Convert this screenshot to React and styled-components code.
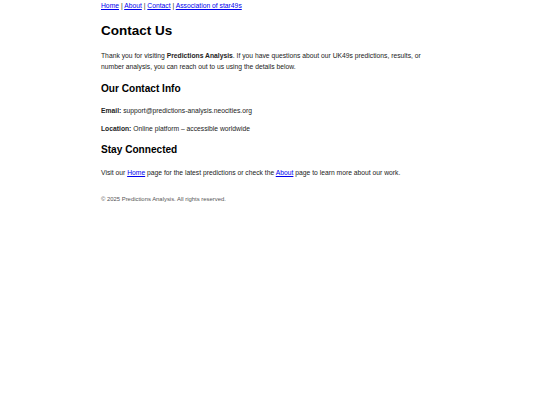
import styled, { createGlobalStyle } from 'styled-components'

const Global = createGlobalStyle`
body{
  margin:0;
  background:#fff;
  font-family:"Liberation Sans", Arial, sans-serif;
  font-size:6.75px;
  line-height:1.6;
  color:#222;
}
`

const Page = styled.div`
width:338px;
margin:0 auto;
`

const Nav = styled.nav`
padding-top:1px;
line-height:10px;
color:#222;
`

const Link = styled.a`
color:#0000ee;
text-decoration:underline;
`

const Title = styled.h1`
font-size:13.5px;
margin:12px 0 12px;
color:#000;
line-height:1.2;
`

const Sub = styled.h2`
font-size:10.1px;
margin:10px 0 11px;
color:#000;
line-height:1.2;
`

const P = styled.p`
margin:0 0 7px;
`

const Footer = styled.footer`
margin-top:17px;
font-size:5.9px;
color:#555;
`

export default function App() {
  return (
    <>
      <Global />
      <Page>
        <Nav>
          <Link href="#">Home</Link> | <Link href="#">About</Link> | <Link href="#">Contact</Link> | <Link href="#">Association of star49s</Link>
        </Nav>
        <Title>Contact Us</Title>
        <P>
          Thank you for visiting <b>Predictions Analysis</b>. If you have questions about our UK49s predictions, results, or number analysis, you can reach out to us using the details below.
        </P>
        <Sub>Our Contact Info</Sub>
        <P><b>Email:</b> support@predictions-analysis.neocities.org</P>
        <P><b>Location:</b> Online platform – accessible worldwide</P>
        <Sub>Stay Connected</Sub>
        <P>Visit our <Link href="#">Home</Link> page for the latest predictions or check the <Link href="#">About</Link> page to learn more about our work.</P>
        <Footer>© 2025 Predictions Analysis. All rights reserved.</Footer>
      </Page>
    </>
  )
}
